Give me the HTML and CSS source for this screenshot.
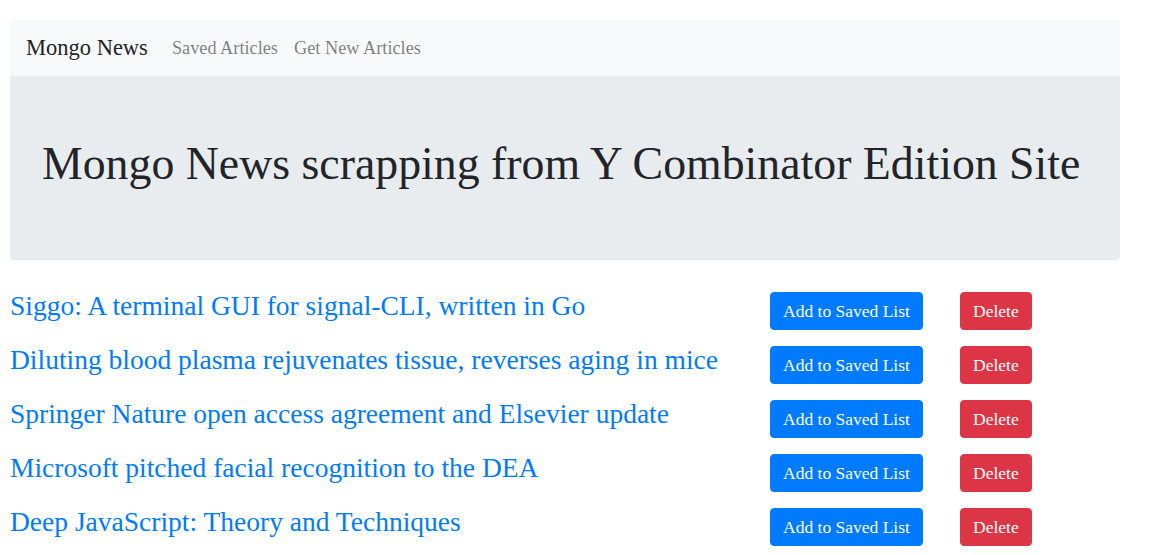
FILE: index.html
```html
<!DOCTYPE html>
<html lang="en">
<head>
<meta charset="utf-8">
<title>Mongo News</title>
<link rel="stylesheet" href="styles.css">
</head>
<body>
<div class="container">
  <nav class="navbar">
    <a class="brand" href="#">Mongo News</a>
    <a class="nav-link" href="#">Saved Articles</a>
    <a class="nav-link" href="#">Get New Articles</a>
  </nav>
  <div class="jumbotron">
    <h1 class="title">Mongo News scrapping from Y Combinator Edition Site</h1>
  </div>
  <div class="articles">
    <div class="article">
      <a class="headline" href="#">Siggo: A terminal GUI for signal-CLI, written in Go</a>
      <div><button class="btn btn-save">Add to Saved List</button></div>
      <div><button class="btn btn-delete">Delete</button></div>
    </div>
    <div class="article">
      <a class="headline" href="#">Diluting blood plasma rejuvenates tissue, reverses aging in mice</a>
      <div><button class="btn btn-save">Add to Saved List</button></div>
      <div><button class="btn btn-delete">Delete</button></div>
    </div>
    <div class="article">
      <a class="headline" href="#">Springer Nature open access agreement and Elsevier update</a>
      <div><button class="btn btn-save">Add to Saved List</button></div>
      <div><button class="btn btn-delete">Delete</button></div>
    </div>
    <div class="article">
      <a class="headline" href="#">Microsoft pitched facial recognition to the DEA</a>
      <div><button class="btn btn-save">Add to Saved List</button></div>
      <div><button class="btn btn-delete">Delete</button></div>
    </div>
    <div class="article">
      <a class="headline" href="#">Deep JavaScript: Theory and Techniques</a>
      <div><button class="btn btn-save">Add to Saved List</button></div>
      <div><button class="btn btn-delete">Delete</button></div>
    </div>
  </div>
</div>
</body>
</html>
```
FILE: styles.css
```css
* { box-sizing: border-box; }
html, body { margin: 0; padding: 0; background: #fff; }
body {
  font-family: "Liberation Serif", "Times New Roman", serif;
  color: #212529;
}
.container {
  width: 1110px;
  margin-left: 10px;
  padding-top: 20px;
}
.navbar {
  display: flex;
  align-items: center;
  height: 56px;
  padding: 8px 16px;
  background: #f8f9fa;
}
.brand {
  font-size: 22.5px;
  line-height: 30px;
  color: #212529;
  text-decoration: none;
  margin-right: 16px;
}
.nav-link {
  font-size: 18.3px;
  line-height: 24px;
  padding: 8px;
  color: rgba(0, 0, 0, 0.5);
  text-decoration: none;
}
.jumbotron {
  background: #e9ecef;
  padding: 64px 32px;
  border-radius: 0 0 4px 4px;
  margin-bottom: 32px;
}
.title {
  margin: 0 0 8px 0;
  font-size: 45.8px;
  line-height: 48px;
  font-weight: 400;
  color: #212529;
}
.articles {
  display: flex;
  flex-direction: column;
  gap: 16px;
}
.article {
  display: grid;
  grid-template-columns: 760px 190px auto;
  align-items: start;
}
.headline {
  font-size: 27.5px;
  line-height: 28px;
  color: #007bff;
  text-decoration: none;
}
.btn {
  font-family: "Liberation Serif", "Times New Roman", serif;
  font-size: 17.5px;
  line-height: 24px;
  padding: 6px 12px;
  border: 1px solid transparent;
  border-radius: 4px;
  color: #fff;
  cursor: pointer;
  display: block;
}
.btn-save { background: #007bff; border-color: #007bff; }
.btn-delete { background: #dc3545; border-color: #dc3545; }
```
